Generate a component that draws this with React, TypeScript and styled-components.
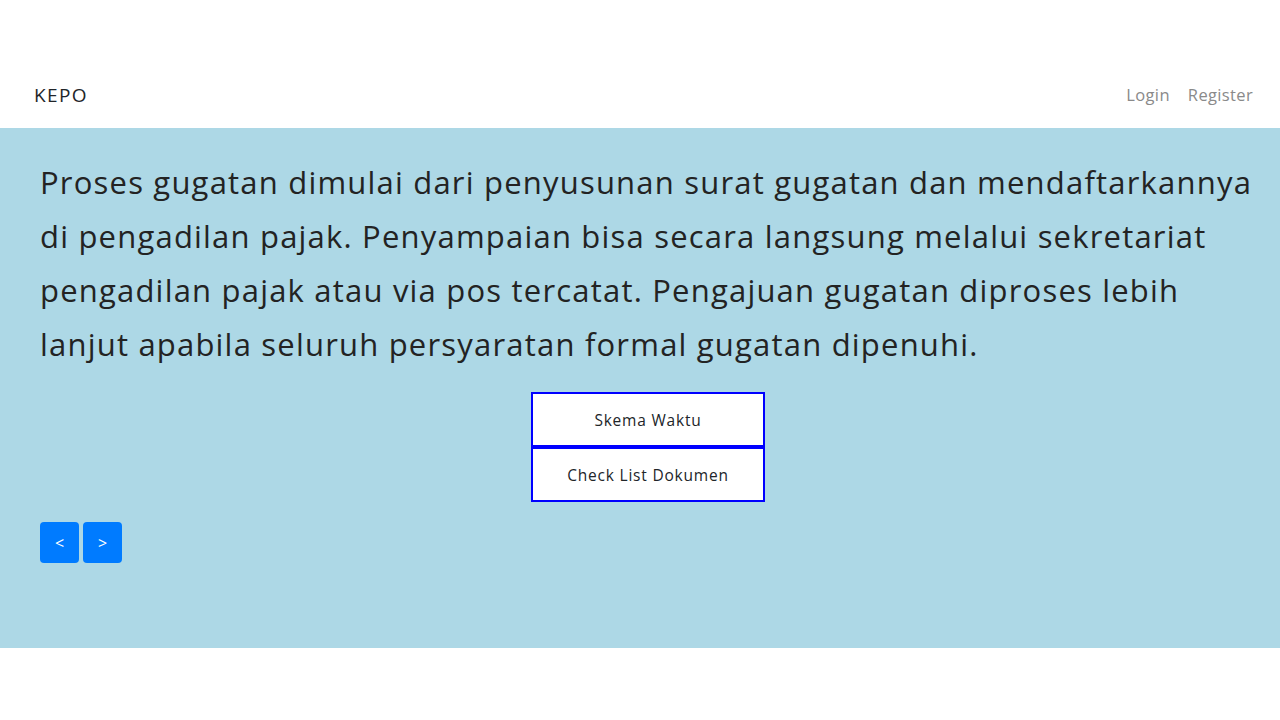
import React from "react";
import styled, { createGlobalStyle } from "styled-components";

const Global = createGlobalStyle`
  html, body { margin: 0; padding: 0; background: #fff; }
  body { font-family: "Open Sans", "Liberation Sans", sans-serif; color: #212529; }
  * { box-sizing: border-box; }
`;

const Header = styled.header`
  height: 128px;
  padding: 61px 27px 0 34px;
  display: flex;
  align-items: center;
  justify-content: space-between;
`;

const Brand = styled.div`
  font-size: 19px;
  color: #212529;
  letter-spacing: 1.4px;
`;

const Nav = styled.nav`
  display: flex;
  gap: 18px;
`;

const NavLink = styled.a`
  font-size: 16.5px;
  color: #8a8a8a;
  text-decoration: none;
  letter-spacing: 0.35px;
`;

const Section = styled.section`
  background: #add8e6;
  height: 520px;
  padding: 27px 24px 0 40px;
  display: flex;
  flex-direction: column;
`;

const Para = styled.p`
  margin: 0 0 21px;
  font-size: 31px;
  line-height: 54px;
  color: #232323;
  white-space: nowrap;
  letter-spacing: 1.2px;
`;

const Choices = styled.div`
  display: flex;
  flex-direction: column;
  align-items: center;
`;

const Choice = styled.button`
  width: 234px;
  height: 55px;
  background: #fff;
  border: 2px solid #0000ff;
  font-family: inherit;
  font-size: 15.5px;
  letter-spacing: 0.8px;
  color: #212529;
  cursor: pointer;
`;

const Pager = styled.div`
  display: flex;
  gap: 4px;
  margin-top: 20px;
`;

const PageButton = styled.button`
  width: 39px;
  height: 41px;
  background: #007bff;
  color: #fff;
  border: none;
  border-radius: 4px;
  font-family: inherit;
  font-size: 16px;
  cursor: pointer;
`;

export default function App() {
  return (
    <>
      <Global />
      <Header>
        <Brand>KEPO</Brand>
        <Nav>
          <NavLink href="#">Login</NavLink>
          <NavLink href="#">Register</NavLink>
        </Nav>
      </Header>
      <Section>
        <Para>
          Proses gugatan dimulai dari penyusunan surat gugatan dan mendaftarkannya
          <br />
          di pengadilan pajak. Penyampaian bisa secara langsung melalui sekretariat
          <br />
          pengadilan pajak atau via pos tercatat. Pengajuan gugatan diproses lebih
          <br />
          lanjut apabila seluruh persyaratan formal gugatan dipenuhi.
        </Para>
        <Choices>
          <Choice>Skema Waktu</Choice>
          <Choice>Check List Dokumen</Choice>
        </Choices>
        <Pager>
          <PageButton>&lt;</PageButton>
          <PageButton>&gt;</PageButton>
        </Pager>
      </Section>
    </>
  );
}
